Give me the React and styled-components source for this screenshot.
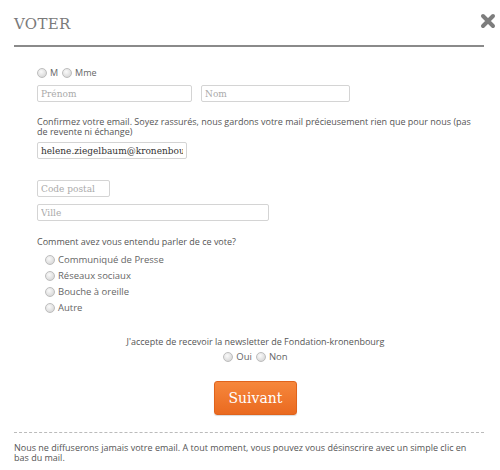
import styled, { createGlobalStyle } from "styled-components";

const GlobalStyle = createGlobalStyle`
  body {
    margin: 0;
    background: #fff;
    font-family: "Open Sans", "Noto Sans", sans-serif;
    color: #555;
  }
`;

const Modal = styled.div`
  width: 500px;
  height: 470px;
  box-sizing: border-box;
  padding: 0 16px 0 14px;
`;

const Header = styled.div`
  display: flex;
  justify-content: space-between;
  align-items: center;
  height: 45px;
  border-bottom: 2px solid #8a8a8a;
`;

const Title = styled.h1`
  margin: 0;
  font-family: "DejaVu Serif", serif;
  font-weight: normal;
  font-size: 15px;
  color: #7a7a7a;
  letter-spacing: 0.3px;
  padding-top: 2px;
`;

const Close = styled.span`
  display: flex;
  margin-right: -12px;
  margin-top: -4px;
`;

const Form = styled.form`
  padding: 19px 10px 0 23px;
  font-size: 9px;
`;

const Row = styled.div`
  display: flex;
  align-items: center;
  gap: ${({ gap }) => gap || 0}px;
  margin-top: ${({ mt }) => mt || 0}px;
  justify-content: ${({ center }) => (center ? "center" : "flex-start")};
`;

const Choice = styled.label`
  display: flex;
  align-items: center;
  gap: 3px;
  color: #666;
  font-size: ${({ size }) => size || 9}px;
  line-height: 13px;
`;

const Dot = styled.span`
  display: inline-block;
  width: 8px;
  height: 8px;
  border-radius: 50%;
  border: 1px solid #bdbdbd;
  background: radial-gradient(circle at 40% 35%, #fafafa 0%, #dcdcdc 70%, #c8c8c8 100%);
  box-sizing: content-box;
`;

const Input = styled.input`
  box-sizing: border-box;
  width: ${({ w }) => w}px;
  height: ${({ h }) => h || 17}px;
  border: 1px solid #d4d4d4;
  border-radius: 2px;
  padding: 0 3px;
  font-family: "DejaVu Serif", serif;
  font-size: 9px;
  color: #333;
  outline: none;
  &::placeholder {
    color: #aaa;
  }
`;

const Text = styled.p`
  margin: ${({ mt }) => mt || 0}px 0 0 0;
  font-size: 9px;
  line-height: 10px;
  color: #555;
  text-align: ${({ center }) => (center ? "center" : "left")};
`;

const Options = styled.div`
  display: flex;
  flex-direction: column;
  gap: 3px;
  margin: 6px 0 0 8px;
`;

const Newsletter = styled.div`
  display: flex;
  flex-direction: column;
  align-items: center;
  margin-top: 23px;
`;

const Button = styled.button`
  width: 83px;
  height: 34px;
  margin-top: 18px;
  border: 1px solid #e0631c;
  border-radius: 3px;
  background: linear-gradient(#f6873c, #ea6a20);
  color: #fff;
  font-family: "DejaVu Serif", serif;
  font-size: 14px;
  cursor: pointer;
  box-shadow: 0 1px 1px rgba(0, 0, 0, 0.15);
`;

const Footer = styled.div`
  margin-top: 17px;
  border-top: 1px dashed #bbb;
  padding: 10px 14px 0 0;
`;

const CloseIcon = () => (
  <svg width="16" height="16" viewBox="0 0 16 16">
    <path d="M3 3 L13 13 M13 3 L3 13" stroke="#7d7d7d" strokeWidth="4" strokeLinecap="round" />
  </svg>
);

const Radio = ({ label, size }) => (
  <Choice size={size}>
    <Dot />
    {label}
  </Choice>
);

const App = () => (
  <Modal>
    <GlobalStyle />
    <Header>
      <Title>VOTER</Title>
      <Close>
        <CloseIcon />
      </Close>
    </Header>
    <Form onSubmit={(e) => e.preventDefault()}>
      <Row gap={4}>
        <Radio label="M" />
        <Radio label="Mme" />
      </Row>
      <Row gap={9} mt={6}>
        <Input w={155} placeholder="Prénom" />
        <Input w={149} placeholder="Nom" />
      </Row>
      <Text mt={15}>
        Confirmez votre email. Soyez rassurés, nous gardons votre mail précieusement rien que pour nous (pas de
        revente ni échange)
      </Text>
      <Row mt={5}>
        <Input w={150} defaultValue="helene.ziegelbaum@kronenbourg.fr" />
      </Row>
      <Row mt={21}>
        <Input w={73} placeholder="Code postal" />
      </Row>
      <Row mt={7}>
        <Input w={232} placeholder="Ville" />
      </Row>
      <Text mt={16}>Comment avez vous entendu parler de ce vote?</Text>
      <Options>
        <Radio label="Communiqué de Presse" size={9.5} />
        <Radio label="Réseaux sociaux" size={9.5} />
        <Radio label="Bouche à oreille" size={9.5} />
        <Radio label="Autre" size={9.5} />
      </Options>
      <Newsletter>
        <Text center>J'accepte de recevoir la newsletter de Fondation-kronenbourg</Text>
        <Row gap={4} mt={3} center>
          <Radio label="Oui" size={9.5} />
          <Radio label="Non" size={9.5} />
        </Row>
        <Button type="submit">Suivant</Button>
      </Newsletter>
    </Form>
    <Footer>
      <Text>
        Nous ne diffuserons jamais votre email. A tout moment, vous pouvez vous désinscrire avec un simple clic en
        bas du mail.
      </Text>
    </Footer>
  </Modal>
);

export default App;
